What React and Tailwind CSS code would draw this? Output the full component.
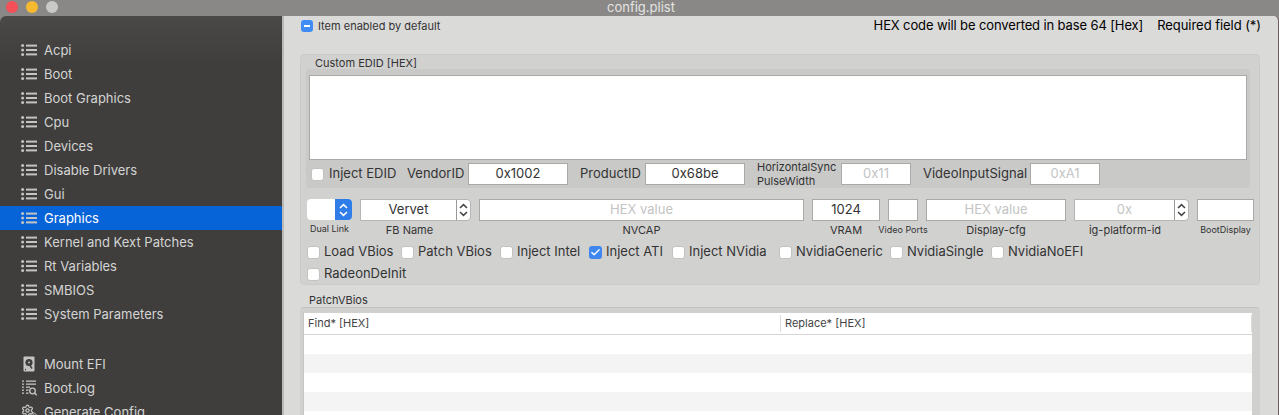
import React from 'react';
import { Check, Settings } from 'lucide-react';

const menu = ['Acpi', 'Boot', 'Boot Graphics', 'Cpu', 'Devices', 'Disable Drivers', 'Gui', 'Graphics', 'Kernel and Kext Patches', 'Rt Variables', 'SMBIOS', 'System Parameters'];

const ListIcon = () => (
  <svg width="16" height="12" viewBox="0 0 16 12" className="shrink-0 fill-[#c4c4c3]">
    <circle cx="1.6" cy="1.6" r="1.5" />
    <circle cx="1.6" cy="6" r="1.5" />
    <circle cx="1.6" cy="10.4" r="1.5" />
    <rect x="5" y="0.6" width="11" height="2" />
    <rect x="5" y="5" width="11" height="2" />
    <rect x="5" y="9.4" width="11" height="2" />
  </svg>
);

const DiskIcon = () => (
  <svg width="16" height="16" viewBox="0 0 16 16" className="shrink-0">
    <rect x="2.5" y="0.5" width="11" height="15" rx="1" fill="#c4c4c3" />
    <circle cx="8" cy="6.5" r="3.6" fill="#3f3f3e" />
    <circle cx="8" cy="6.5" r="1" fill="#c4c4c3" />
    <path d="M8 8 L11 12.5" stroke="#3f3f3e" strokeWidth="1.4" />
    <circle cx="4.5" cy="13.5" r="0.7" fill="#3f3f3e" />
  </svg>
);

const LogIcon = () => (
  <svg width="16" height="16" viewBox="0 0 16 16" className="shrink-0 fill-[#c4c4c3]">
    <rect x="5" y="0.5" width="10" height="1.3" />
    <rect x="5" y="3.5" width="10" height="1.3" />
    <rect x="5" y="6.5" width="4" height="1.3" />
    <rect x="5" y="9.5" width="2.5" height="1.3" />
    <rect x="5" y="12.5" width="2.5" height="1.3" />
    <rect x="1" y="0.5" width="2" height="1.3" />
    <rect x="1" y="3.5" width="2" height="1.3" />
    <rect x="1" y="6.5" width="2" height="1.3" />
    <rect x="1" y="9.5" width="2" height="1.3" />
    <rect x="1" y="12.5" width="2" height="1.3" />
    <circle cx="11.5" cy="11" r="2.8" fill="none" stroke="#c4c4c3" strokeWidth="1.3" />
    <path d="M13.5 13 L15.8 15.3" stroke="#c4c4c3" strokeWidth="1.5" />
  </svg>
);

const GearsIcon = () => (
  <span className="relative h-[16px] w-[16px] shrink-0 text-[#c4c4c3]">
    <Settings size={13} strokeWidth={2.4} />
    <Settings size={7} strokeWidth={3} className="absolute bottom-[1px] right-0" />
  </span>
);

const Chevrons = ({ className }) => (
  <svg width="9" height="14" viewBox="0 0 9 14" fill="none" stroke="currentColor" strokeWidth="1.5" className={className}>
    <path d="M1 5 L4.5 1.6 L8 5" />
    <path d="M1 9 L4.5 12.4 L8 9" />
  </svg>
);

const Checkbox = ({ checked }) => (
  <span className={`flex h-[13px] w-[13px] shrink-0 items-center justify-center rounded-[3px] ${checked ? 'bg-[#3f86ee]' : 'border border-[#c2c2c1] bg-white'}`}>
    {checked && <Check size={11} strokeWidth={3} className="text-white" />}
  </span>
);

const CheckItem = ({ label, checked, className }) => (
  <div className={`flex items-center gap-[4px] text-[13px] text-[#333] ${className}`}>
    <Checkbox checked={checked} />
    <span>{label}</span>
  </div>
);

const Field = ({ value, placeholder, className }) => (
  <div className={`flex h-[22px] items-center justify-center border border-[#a9a9a8] bg-white text-[13px] ${placeholder ? 'text-[#c4c4c4]' : 'text-[#333]'} ${className}`}>
    {value || placeholder}
  </div>
);

const Combo = ({ value, placeholder }) => (
  <div className={`flex h-[22px] items-center rounded-r-[4px] border border-[#b5b5b4] bg-white text-[13px] ${placeholder ? 'text-[#c4c4c4]' : 'text-[#333]'}`}>
    <span className="flex-1 text-center">{value || placeholder}</span>
    <div className="flex h-full w-[14px] items-center justify-center border-l border-[#999] text-[#444]">
      <Chevrons />
    </div>
  </div>
);

const Labeled = ({ label, small, className, labelClass, children }) => (
  <div className={`flex shrink-0 flex-col ${className}`}>
    {children}
    <span className={`mt-[2px] whitespace-nowrap text-center leading-[14px] text-[#333] ${small ? 'text-[9px]' : 'text-[11px]'} ${labelClass}`}>{label}</span>
  </div>
);

export default function App() {
  return (
    <div className="flex h-[415px] w-[1279px] flex-col overflow-hidden bg-[#8b8a89] font-['Inter',sans-serif]">
      <div className="relative flex h-[16px] shrink-0 items-center gap-[8px] bg-[#8a8887] pb-[2px] pl-[6px]">
        <span className="h-[12px] w-[12px] rounded-full bg-[#f5505a]" />
        <span className="h-[12px] w-[12px] rounded-full bg-[#f7b92e]" />
        <span className="h-[12px] w-[12px] rounded-full bg-[#c9c9c8]" />
        <span className="absolute left-[607px] top-[-1px] text-[13px] leading-[16px] text-[#e4e4e3]">config.plist</span>
      </div>

      <div className="flex min-h-0 flex-1">
        <aside className="flex w-[282px] shrink-0 flex-col rounded-tl-[6px] bg-linear-to-b from-[#4a4948] to-[#3f3e3d] to-[12%] pt-[22px] text-[13px] text-[#d4d4d3]">
          {menu.map((item) => (
            <div key={item} className={`flex h-[24px] shrink-0 items-center gap-[7px] pl-[21px] ${item === 'Graphics' ? 'bg-[#0763d8] text-white' : ''}`}>
              <ListIcon />
              <span className="pt-[2px]">{item}</span>
            </div>
          ))}
          <div className="mt-[26px] flex h-[24px] shrink-0 items-center gap-[7px] pl-[21px]"><DiskIcon /><span className="pt-[2px]">Mount EFI</span></div>
          <div className="flex h-[24px] shrink-0 items-center gap-[7px] pl-[21px]"><LogIcon /><span className="pt-[2px]">Boot.log</span></div>
          <div className="flex h-[24px] shrink-0 items-center gap-[7px] pl-[21px]"><GearsIcon /><span className="pt-[2px]">Generate Config</span></div>
        </aside>

        <main className="min-w-0 flex-1 rounded-tr-[5px] border-l-2 border-r border-l-[#b9b9b8] border-r-[#6b5a60] bg-[#dadad9] pl-[16px] pr-[18px]">
          <div className="-mr-[1px] flex h-[20px] items-center pl-[1px]">
            <span className="flex h-[12px] w-[12px] items-center justify-center rounded-[3px] bg-[#3f8cf5]">
              <span className="h-[2px] w-[6px] bg-white" />
            </span>
            <span className="ml-[5px] text-[11px] text-[#333]">Item enabled by default</span>
            <span className="ml-auto text-[13px] tracking-[-0.12px] text-black">HEX code will be converted in base 64 [Hex]</span>
            <span className="ml-[14px] text-[13px] tracking-[-0.05px] text-black">Required field (*)</span>
          </div>

          <section className="mt-[18px] h-[231px] rounded-[4px] border border-[#cbcbca] bg-[#d1d1d0]">
            <h2 className="h-[14px] pl-[14px] text-[11px] leading-[16px] text-[#333]">Custom EDID [HEX]</h2>
            <div className="ml-[5px] mr-[9px] h-[119px] rounded-[4px] bg-[#c9c9c8] px-[3px] pt-[6px]">
              <div className="h-[85px] border border-[#a9a9a8] bg-white" />
              <div className="mt-[3px] flex h-[22px] items-center text-[13px] text-[#333]">
                <CheckItem label="Inject EDID" className="ml-[2px] w-[96px] gap-[5px]" />
                <span className="w-[61px]">VendorID</span>
                <Field value="0x1002" className="w-[100px]" />
                <span className="ml-[12px] w-[65px]">ProductID</span>
                <Field value="0x68be" className="w-[100px]" />
                <span className="ml-[12px] w-[84px] whitespace-nowrap text-[11px] leading-[14px]">HorizontalSync<br />PulseWidth</span>
                <Field placeholder="0x11" className="w-[70px]" />
                <span className="ml-[12px] w-[107px]">VideoInputSignal</span>
                <Field placeholder="0xA1" className="w-[70px]" />
              </div>
            </div>

            <div className="mt-[11px] flex gap-[8px] pl-[6px]">
              <Labeled label="Dual Link" small className="w-[45px]">
                <div className="flex h-[21px] overflow-hidden rounded-[4px] bg-white">
                  <div className="flex-1" />
                  <div className="flex w-[17px] items-center justify-center bg-[#2f7de8] text-white"><Chevrons /></div>
                </div>
              </Labeled>
              <Labeled label="FB Name" labelClass="pr-[12px]" className="w-[111px]"><Combo value="Vervet" /></Labeled>
              <Labeled label="NVCAP" className="w-[325px]"><Field placeholder="HEX value" /></Labeled>
              <Labeled label="VRAM" className="w-[68px]"><Field value="1024" /></Labeled>
              <Labeled label="Video Ports" small className="w-[30px] items-center"><Field className="w-[30px]" /></Labeled>
              <Labeled label="Display-cfg" className="w-[140px]"><Field placeholder="HEX value" /></Labeled>
              <Labeled label="ig-platform-id" labelClass="pr-[13px]" className="w-[115px]"><Combo placeholder="0x" /></Labeled>
              <Labeled label="BootDisplay" small className="w-[57px]"><Field /></Labeled>
            </div>
            <div className="mt-[4px] flex h-[22px] items-center pl-[6px]">
              <CheckItem label="Load VBios" className="w-[94px]" />
              <CheckItem label="Patch VBios" className="w-[99px]" />
              <CheckItem label="Inject Intel" className="w-[89px]" />
              <CheckItem label="Inject ATI" checked className="w-[83px]" />
              <CheckItem label="Inject NVidia" className="w-[107px]" />
              <CheckItem label="NvidiaGeneric" className="w-[111px]" />
              <CheckItem label="NvidiaSingle" className="w-[101px]" />
              <CheckItem label="NvidiaNoEFI" />
            </div>
            <div className="flex h-[22px] items-center pl-[6px]">
              <CheckItem label="RadeonDeInit" />
            </div>
          </section>

          <h2 className="mt-[8px] pl-[9px] text-[11px] leading-[14px] text-[#333]">PatchVBios</h2>
          <div className="h-[120px] rounded-t-[4px] border-t border-[#c2c2c1] bg-[#d0d0cf] pl-[3px] pr-[8px] pt-[5px]">
            <div className="h-[110px] border-l border-[#c5c5c4] bg-white">
              <div className="flex h-[22px] items-center border-b border-[#d4d4d4] text-[11px] text-[#444]">
                <span className="w-[477px] border-r border-[#dcdcdc] pl-[4px]">Find* [HEX]</span>
                <span className="flex-1 border-r border-[#dcdcdc] pl-[4px]">Replace* [HEX]</span>
              </div>
              <div className="h-[19px]" />
              <div className="h-[19px] bg-[#f4f4f4]" />
              <div className="h-[19px]" />
              <div className="h-[19px] bg-[#f4f4f4]" />
            </div>
          </div>
        </main>
      </div>
    </div>
  );
}
